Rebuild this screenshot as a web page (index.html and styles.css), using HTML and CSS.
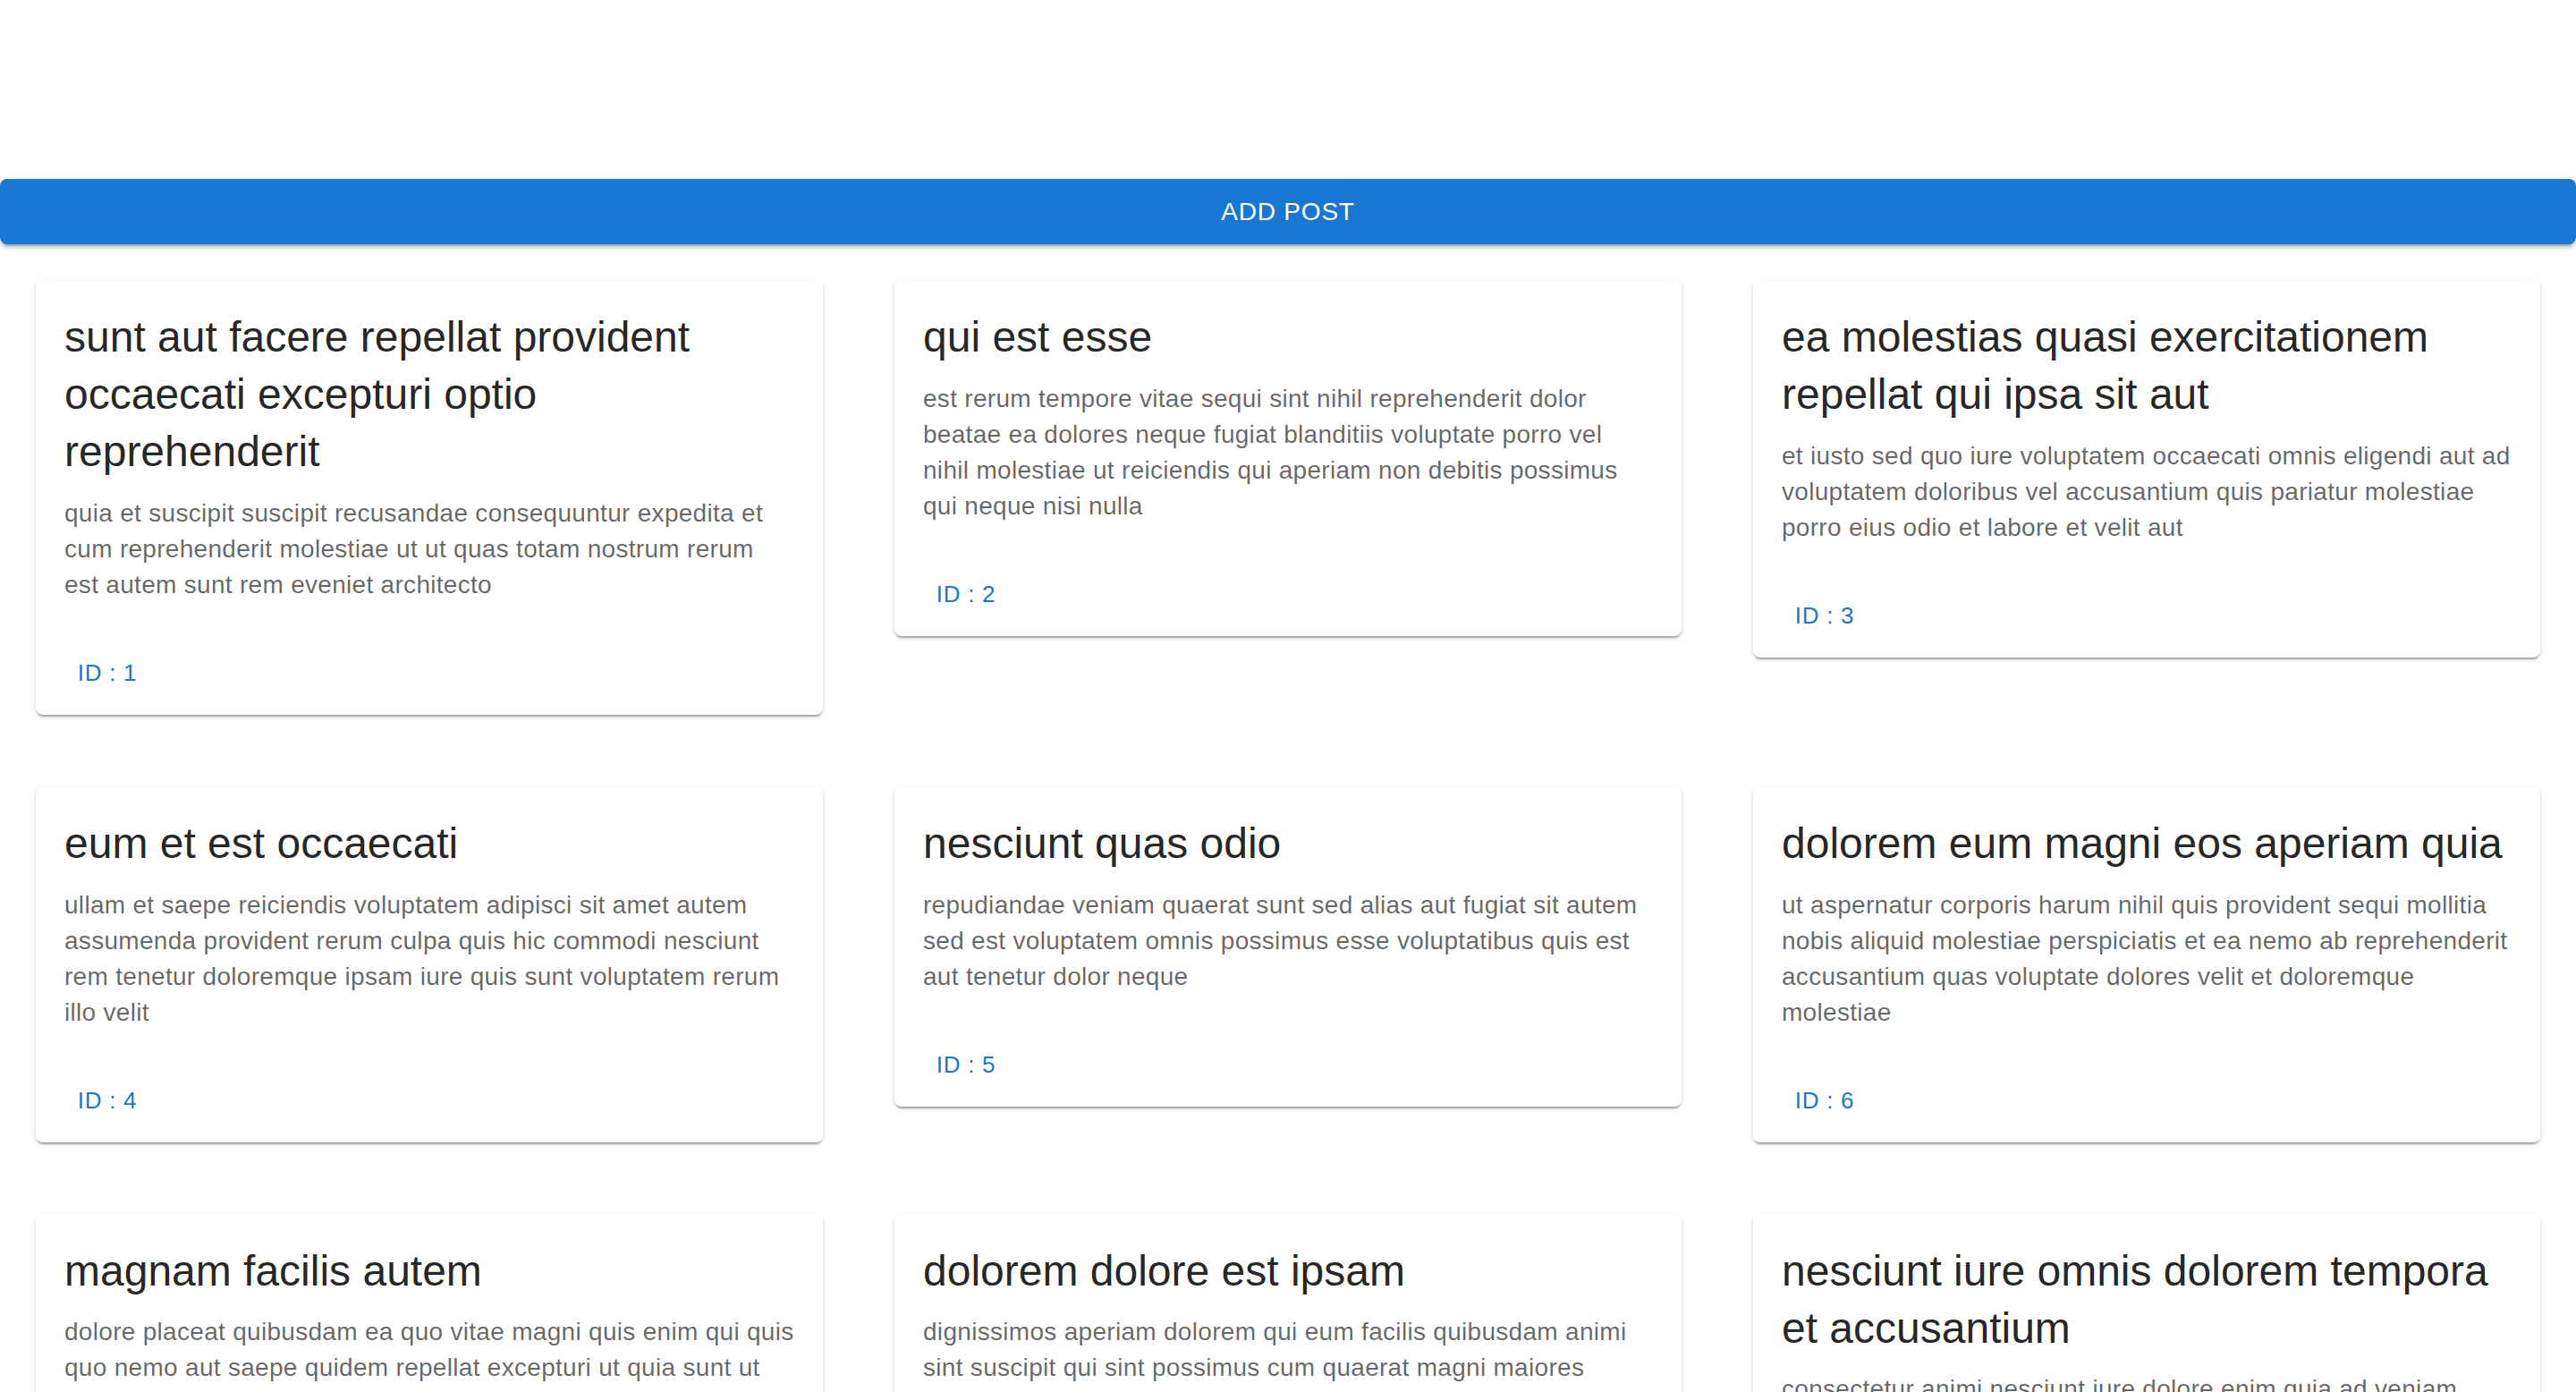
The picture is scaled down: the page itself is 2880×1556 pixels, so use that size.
FILE: index.html
```html
<!DOCTYPE html>
<html lang="en">
<head>
<meta charset="utf-8">
<title>Posts</title>
<link rel="stylesheet" href="styles.css">
</head>
<body>
<div class="top-space"></div>
<button class="add-btn">Add Post</button>
<main class="grid">
  <div class="card">
    <div class="card-content">
      <h5 class="title">sunt aut facere repellat provident occaecati excepturi optio reprehenderit</h5>
      <p class="body">quia et suscipit suscipit recusandae consequuntur expedita et cum reprehenderit molestiae ut ut quas totam nostrum rerum est autem sunt rem eveniet architecto</p>
    </div>
    <div class="card-actions"><button class="id-btn">ID : 1</button></div>
  </div>
  <div class="card">
    <div class="card-content">
      <h5 class="title">qui est esse</h5>
      <p class="body">est rerum tempore vitae sequi sint nihil reprehenderit dolor beatae ea dolores neque fugiat blanditiis voluptate porro vel nihil molestiae ut reiciendis qui aperiam non debitis possimus qui neque nisi nulla</p>
    </div>
    <div class="card-actions"><button class="id-btn">ID : 2</button></div>
  </div>
  <div class="card">
    <div class="card-content">
      <h5 class="title">ea molestias quasi exercitationem repellat qui ipsa sit aut</h5>
      <p class="body">et iusto sed quo iure voluptatem occaecati omnis eligendi aut ad voluptatem doloribus vel accusantium quis pariatur molestiae porro eius odio et labore et velit aut</p>
    </div>
    <div class="card-actions"><button class="id-btn">ID : 3</button></div>
  </div>
  <div class="card">
    <div class="card-content">
      <h5 class="title">eum et est occaecati</h5>
      <p class="body">ullam et saepe reiciendis voluptatem adipisci sit amet autem assumenda provident rerum culpa quis hic commodi nesciunt rem tenetur doloremque ipsam iure quis sunt voluptatem rerum illo velit</p>
    </div>
    <div class="card-actions"><button class="id-btn">ID : 4</button></div>
  </div>
  <div class="card">
    <div class="card-content">
      <h5 class="title">nesciunt quas odio</h5>
      <p class="body">repudiandae veniam quaerat sunt sed alias aut fugiat sit autem sed est voluptatem omnis possimus esse voluptatibus quis est aut tenetur dolor neque</p>
    </div>
    <div class="card-actions"><button class="id-btn">ID : 5</button></div>
  </div>
  <div class="card">
    <div class="card-content">
      <h5 class="title">dolorem eum magni eos aperiam quia</h5>
      <p class="body">ut aspernatur corporis harum nihil quis provident sequi mollitia nobis aliquid molestiae perspiciatis et ea nemo ab reprehenderit accusantium quas voluptate dolores velit et doloremque molestiae</p>
    </div>
    <div class="card-actions"><button class="id-btn">ID : 6</button></div>
  </div>
  <div class="card">
    <div class="card-content">
      <h5 class="title">magnam facilis autem</h5>
      <p class="body">dolore placeat quibusdam ea quo vitae magni quis enim qui quis quo nemo aut saepe quidem repellat excepturi ut quia sunt ut sequi eos ea sed quas</p>
    </div>
    <div class="card-actions"><button class="id-btn">ID : 7</button></div>
  </div>
  <div class="card">
    <div class="card-content">
      <h5 class="title">dolorem dolore est ipsam</h5>
      <p class="body">dignissimos aperiam dolorem qui eum facilis quibusdam animi sint suscipit qui sint possimus cum quaerat magni maiores excepturi ipsam ut commodi dolor voluptatum modi aut vitae</p>
    </div>
    <div class="card-actions"><button class="id-btn">ID : 8</button></div>
  </div>
  <div class="card">
    <div class="card-content">
      <h5 class="title">nesciunt iure omnis dolorem tempora et accusantium</h5>
      <p class="body">consectetur animi nesciunt iure dolore enim quia ad veniam autem ut quam aut nobis et est aut quod aut provident voluptas autem voluptas</p>
    </div>
    <div class="card-actions"><button class="id-btn">ID : 9</button></div>
  </div>
</main>
</body>
</html>
```
FILE: styles.css
```css
* { box-sizing: border-box; }
html, body {
  margin: 0;
  padding: 0;
  background: #fff;
  font-family: "Liberation Sans", Arial, Helvetica, sans-serif;
}
.top-space { height: 200px; }
.add-btn {
  display: block;
  width: 100%;
  height: 73px;
  margin: 0;
  border: 0;
  border-radius: 8px;
  background: #1976d2;
  color: #fff;
  font-family: inherit;
  font-size: 28px;
  font-weight: 400;
  letter-spacing: 0.8px;
  text-transform: uppercase;
  line-height: 49px;
  padding: 12px 32px;
  box-shadow: 0 6px 2px -4px rgba(0,0,0,0.2), 0 4px 4px 0 rgba(0,0,0,0.14), 0 2px 10px 0 rgba(0,0,0,0.12);
}
.grid {
  display: grid;
  grid-template-columns: repeat(3, 880px);
  column-gap: 80px;
  row-gap: 80px;
  padding: 40px 40px;
  align-items: start;
}
.card {
  background: #fff;
  border-radius: 8px;
  box-shadow: 0 4px 2px -2px rgba(0,0,0,0.2), 0 2px 2px 0 rgba(0,0,0,0.14), 0 2px 6px 0 rgba(0,0,0,0.12);
  overflow: hidden;
}
.card-content { padding: 32px 32px 32px; }
.title {
  margin: 0 0 16.8px;
  font-size: 48px;
  line-height: 64px;
  font-weight: 400;
  color: rgba(0,0,0,0.87);
}
.body {
  margin: 0;
  font-size: 28px;
  line-height: 40px;
  letter-spacing: 0.3px;
  color: rgba(0,0,0,0.6);
}
.card-actions {
  display: flex;
  align-items: center;
  padding: 16px;
}
.id-btn {
  min-width: 128px;
  height: 61px;
  padding: 8px 10px;
  border: 0;
  border-radius: 8px;
  background: transparent;
  color: #1976d2;
  font-family: inherit;
  font-size: 26px;
  letter-spacing: 0.74px;
  line-height: 45px;
  text-transform: uppercase;
  text-align: center;
}
```
